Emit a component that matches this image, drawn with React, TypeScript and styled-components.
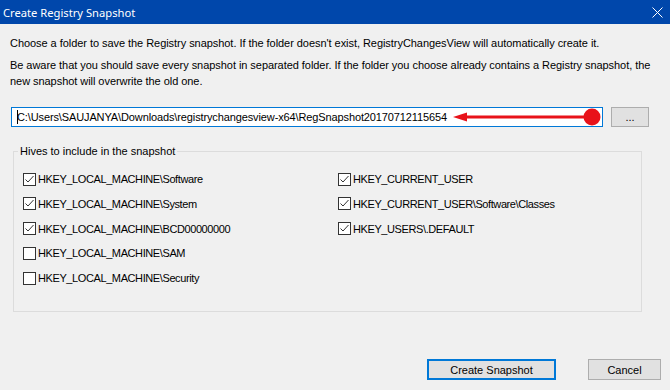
import styled, { createGlobalStyle } from 'styled-components';

const GlobalStyle = createGlobalStyle`
  body {
    margin: 0;
    background: #f0f0f0;
    font-family: "Liberation Sans", Arial, sans-serif;
    font-size: 11px;
    color: #000;
  }
`;

const columns: { label: string; checked: boolean }[][] = [
  [
    { label: 'HKEY_LOCAL_MACHINE\\Software', checked: true },
    { label: 'HKEY_LOCAL_MACHINE\\System', checked: true },
    { label: 'HKEY_LOCAL_MACHINE\\BCD00000000', checked: true },
    { label: 'HKEY_LOCAL_MACHINE\\SAM', checked: false },
    { label: 'HKEY_LOCAL_MACHINE\\Security', checked: false },
  ],
  [
    { label: 'HKEY_CURRENT_USER', checked: true },
    { label: 'HKEY_CURRENT_USER\\Software\\Classes', checked: true },
    { label: 'HKEY_USERS\\.DEFAULT', checked: true },
  ],
];

function CheckItem({ label, checked }: { label: string; checked: boolean }) {
  return (
    <Item>
      <Box>
        {checked && (
          <svg width="11" height="11" viewBox="0 0 11 11">
            <polyline points="1.5,5.5 4,8 9.5,2" fill="none" stroke="#333" strokeWidth="1" />
          </svg>
        )}
      </Box>
      <span>{label}</span>
    </Item>
  );
}

export default function App() {
  return (
    <Window>
      <GlobalStyle />
      <TitleBar>
        <span>Create Registry Snapshot</span>
        <svg width="11" height="11" viewBox="0 0 11 11">
          <path d="M0.5 0.5 L10.5 10.5 M10.5 0.5 L0.5 10.5" stroke="#fff" strokeWidth="1" />
        </svg>
      </TitleBar>
      <Content>
        <Text>
          Choose a folder to save the Registry snapshot. If the folder doesn't exist, RegistryChangesView will automatically create it.
        </Text>
        <Text $gap={18}>
          Be aware that you should save every snapshot in separated folder. If the folder you choose already contains a Registry snapshot, the
          <br />
          new snapshot will overwrite the old one.
        </Text>
        <PathRow>
          <PathInput>
            <Caret />
            C:\Users\SAUJANYA\Downloads\registrychangesview-x64\RegSnapshot20170712115654
            <Annotation width="150" height="18" viewBox="0 0 150 18">
              <line x1="12" y1="9" x2="139" y2="9" stroke="#e8121a" strokeWidth="3" />
              <polygon points="0,9 14,4.5 14,13.5" fill="#e8121a" />
              <circle cx="139" cy="9" r="8.5" fill="#e8121a" />
            </Annotation>
          </PathInput>
          <SmallButton>...</SmallButton>
        </PathRow>
        <Group>
          <Legend>Hives to include in the snapshot</Legend>
          <Grid>
            {columns.flatMap((col, i) =>
              col.map((h, j) => <CheckItem key={`${i}-${j}`} label={h.label} checked={h.checked} />)
            )}
          </Grid>
        </Group>
        <ButtonRow>
          <Button $primary>Create Snapshot</Button>
          <Button $width={73}>Cancel</Button>
        </ButtonRow>
      </Content>
    </Window>
  );
}

const Window = styled.div`
  width: 670px;
  height: 390px;
  background: #f0f0f0;
  display: flex;
  flex-direction: column;
  overflow: hidden;
`;

const TitleBar = styled.div`
  height: 24px;
  flex: none;
  background: #0047ab;
  color: #fff;
  display: flex;
  align-items: center;
  justify-content: space-between;
  padding: 0 7px 0 3px;
  font-family: "Noto Sans", "Open Sans", sans-serif;
  font-size: 11.2px;
`;

const Content = styled.div`
  padding: 11px 9px 0 10px;
  display: flex;
  flex-direction: column;
`;

const Text = styled.p<{ $gap?: number }>`
  margin: 0 0 ${p => p.$gap ?? 6}px;
  line-height: 16px;
  white-space: nowrap;
  letter-spacing: -0.05px;
`;

const PathRow = styled.div`
  display: flex;
  align-items: center;
  gap: 8px;
  padding-left: 1px;
`;

const PathInput = styled.div`
  position: relative;
  width: 592px;
  height: 20px;
  box-sizing: border-box;
  border: 1px solid #0078d7;
  background: #fff;
  padding-left: 5px;
  line-height: 18px;
  white-space: nowrap;
  letter-spacing: -0.12px;
`;

const Caret = styled.span`
  position: absolute;
  left: 5px;
  top: 2px;
  width: 1px;
  height: 14px;
  background: #000;
`;

const Annotation = styled.svg`
  position: absolute;
  left: 441px;
  top: 0;
`;

const SmallButton = styled.div`
  width: 38px;
  height: 20px;
  box-sizing: border-box;
  border: 1px solid #adadad;
  background: #e1e1e1;
  display: flex;
  align-items: center;
  justify-content: center;
`;

const Group = styled.fieldset`
  margin: 16px 0 0 3px;
  width: 629px;
  box-sizing: border-box;
  border: 1px solid #dcdcdc;
  padding: 12px 0 25px 9px;
`;

const Legend = styled.legend`
  padding: 0 2px;
  margin-left: -5px;
  line-height: 16px;
`;

const Grid = styled.div`
  display: grid;
  grid-template-columns: 315px 1fr;
  grid-template-rows: repeat(5, 16px);
  grid-auto-flow: column;
  row-gap: 8.75px;
`;

const Item = styled.label`
  display: flex;
  align-items: center;
  gap: 2px;
  line-height: 16px;
  letter-spacing: -0.4px;
`;

const Box = styled.span`
  width: 13px;
  height: 13px;
  box-sizing: border-box;
  border: 1px solid #333;
  background: #fff;
  display: flex;
  align-items: center;
  justify-content: center;
`;

const ButtonRow = styled.div`
  display: flex;
  justify-content: flex-end;
  gap: 32px;
  margin-top: 47px;
`;

const Button = styled.div<{ $primary?: boolean; $width?: number }>`
  width: ${p => p.$width ?? 129}px;
  height: 21px;
  box-sizing: border-box;
  border: ${p => (p.$primary ? '2px solid #0078d7' : '1px solid #adadad')};
  background: #e1e1e1;
  display: flex;
  align-items: center;
  justify-content: center;
`;
